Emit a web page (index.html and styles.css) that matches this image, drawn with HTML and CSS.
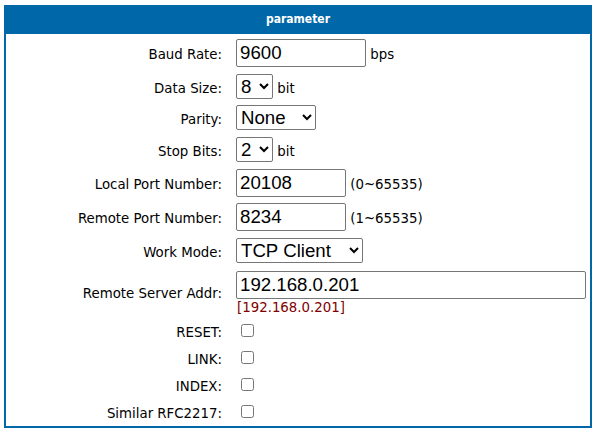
FILE: index.html
```html
<!DOCTYPE html>
<html>
<head>
<meta charset="utf-8">
<link rel="stylesheet" href="styles.css">
</head>
<body>
<div class="panel">
  <div class="panel-head">parameter</div>
  <div class="panel-body">
    <div class="row h35">
      <div class="lbl">Baud Rate:</div>
      <div class="val"><input class="txt w-baud" type="text" value="9600"> bps</div>
    </div>
    <div class="row h31">
      <div class="lbl">Data Size:</div>
      <div class="val"><select class="sel w-8"><option>8</option></select> bit</div>
    </div>
    <div class="row h32">
      <div class="lbl">Parity:</div>
      <div class="val"><select class="sel w-none"><option>None</option></select></div>
    </div>
    <div class="row h32">
      <div class="lbl">Stop Bits:</div>
      <div class="val"><select class="sel w-8"><option>2</option></select> bit</div>
    </div>
    <div class="row h34">
      <div class="lbl">Local Port Number:</div>
      <div class="val"><input class="txt w-port" type="text" value="20108"> (0~65535)</div>
    </div>
    <div class="row h35">
      <div class="lbl">Remote Port Number:</div>
      <div class="val"><input class="txt w-port" type="text" value="8234"> (1~65535)</div>
    </div>
    <div class="row h33">
      <div class="lbl">Work Mode:</div>
      <div class="val"><select class="sel w-mode"><option>TCP Client</option></select></div>
    </div>
    <div class="row row-mid h53">
      <div class="lbl">Remote Server Addr:</div>
      <div class="val"><input class="txt w-full" type="text" value="192.168.0.201"><div class="hint">[192.168.0.201]</div></div>
    </div>
    <div class="row h27">
      <div class="lbl">RESET:</div>
      <div class="val"><input class="chk" type="checkbox"></div>
    </div>
    <div class="row h27">
      <div class="lbl">LINK:</div>
      <div class="val"><input class="chk" type="checkbox"></div>
    </div>
    <div class="row h27">
      <div class="lbl">INDEX:</div>
      <div class="val"><input class="chk" type="checkbox"></div>
    </div>
    <div class="row h26">
      <div class="lbl">Similar RFC2217:</div>
      <div class="val"><input class="chk" type="checkbox"></div>
    </div>
  </div>
</div>
</body>
</html>
```

FILE: styles.css
```css
html, body {
  background: #ffffff;
}
body {
  margin: 5px 4px;
  font-family: "DejaVu Sans", Verdana, sans-serif;
  font-size: 13.33px;
  color: #000000;
}
.panel {
  border: 2px solid #0068a9;
  border-top: 0;
  height: 423px;
  box-sizing: border-box;
  overflow: hidden;
}
.panel-head {
  background: #0068a9;
  color: #ffffff;
  font-family: "DejaVu Sans Condensed", "DejaVu Sans", sans-serif;
  font-weight: bold;
  font-size: 12px;
  height: 29px;
  line-height: 29px;
  text-align: center;
  margin: 0 -2px;
}
.panel-body {
  display: flex;
  flex-direction: column;
  padding-right: 4px;
}
.row {
  display: grid;
  grid-template-columns: 216px 1fr;
  column-gap: 14px;
  align-items: baseline;
  align-content: start;
  padding-top: 5px;
  box-sizing: border-box;
  flex: none;
}
.h26 { height: 26px; }
.h27 { height: 27px; }
.h31 { height: 31px; }
.h32 { height: 32px; }
.h33 { height: 33px; }
.h34 { height: 34px; }
.h35 { height: 35px; }
.h53 { height: 53px; }
.row-mid {
  align-items: center;
  padding-top: 5px;
  padding-bottom: 4px;
}
.lbl {
  text-align: right;
}
.val {
  white-space: nowrap;
}
.txt {
  font-family: "Liberation Sans", Arial, sans-serif;
  font-size: 18.67px;
  height: 28px;
  box-sizing: border-box;
  border: 1px solid #767676;
  border-radius: 2px;
  padding: 1px 3px;
  margin: 0;
  color: #000;
  vertical-align: baseline;
}
.sel {
  font-family: "Liberation Sans", Arial, sans-serif;
  font-size: 18.67px;
  height: 25px;
  box-sizing: border-box;
  border: 1px solid #767676;
  border-radius: 2px;
  margin: 0;
  color: #000;
  background-color: #fff;
}
.w-baud { width: 130px; }
.w-port { width: 110px; }
.w-full { width: 100%; display: block; }
.w-8 { width: 37px; }
.w-none { width: 80px; }
.w-mode { width: 127px; }
.hint {
  color: #800000;
  line-height: 16px;
  margin-top: 1px;
  margin-left: 1px;
}
.chk {
  width: 13px;
  height: 13px;
  margin: 0 0 0 5px;
  vertical-align: baseline;
}
```
